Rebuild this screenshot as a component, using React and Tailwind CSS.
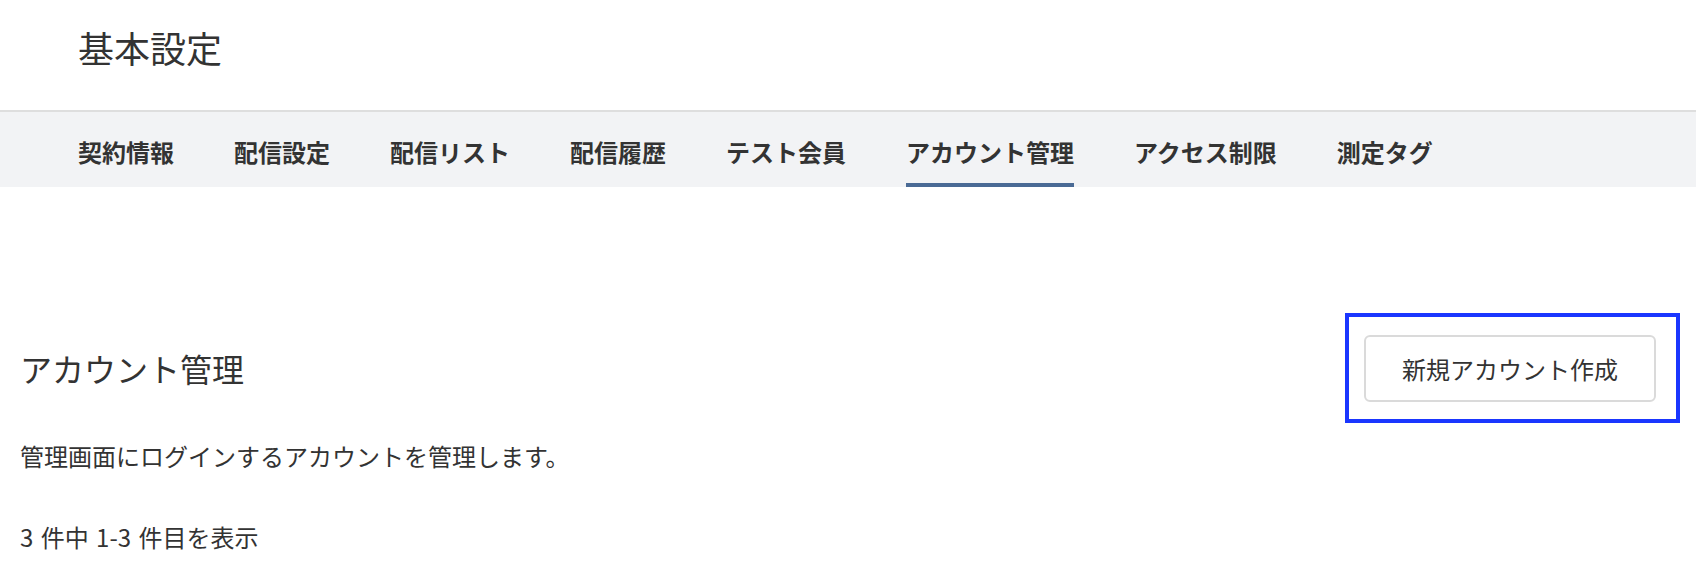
import React from "react";

const tabs = [
  "契約情報",
  "配信設定",
  "配信リスト",
  "配信履歴",
  "テスト会員",
  "アカウント管理",
  "アクセス制限",
  "測定タグ",
];

export default function App() {
  return (
    <div className="w-[1696px] h-[570px] overflow-hidden bg-white text-[#333333] font-['Noto_Sans_CJK_JP','Noto_Sans',sans-serif]">
      <header className="h-[110px] pl-[78px] pt-[29px]">
        <h1 className="text-[36px] leading-none font-normal">基本設定</h1>
      </header>
      <nav className="h-[77px] border-t-2 border-[#dedede] bg-[#f2f3f5] flex gap-[60px] pl-[78px]">
        {tabs.map((t) => (
          <div
            key={t}
            className={
              t === "アカウント管理"
                ? "flex items-center pt-[8px] border-b-4 border-[#4a6a95] text-[24px] font-bold leading-none"
                : "flex items-center pt-[8px] border-b-4 border-transparent text-[24px] font-bold leading-none"
            }
          >
            {t}
          </div>
        ))}
      </nav>
      <main className="pl-[20px] pr-[16px] pt-[126px]">
        <div className="flex items-center justify-between">
          <h2 className="text-[32px] leading-none font-normal">アカウント管理</h2>
          <div className="border-4 border-[#1a36ff] pl-[15px] pr-[20px] pt-[18px] pb-[17px]">
            <button className="w-[292px] h-[67px] border-2 border-[#dadada] rounded-[6px] bg-white text-[24px] leading-none flex items-center justify-center text-[#333333]">
              新規アカウント作成
            </button>
          </div>
        </div>
        <p className="mt-[21px] text-[24px] leading-none">
          管理画面にログインするアカウントを管理します。
        </p>
        <p className="mt-[57px] text-[24px] leading-none [word-spacing:2px]">3 件中 1-3 件目を表示</p>
      </main>
    </div>
  );
}
